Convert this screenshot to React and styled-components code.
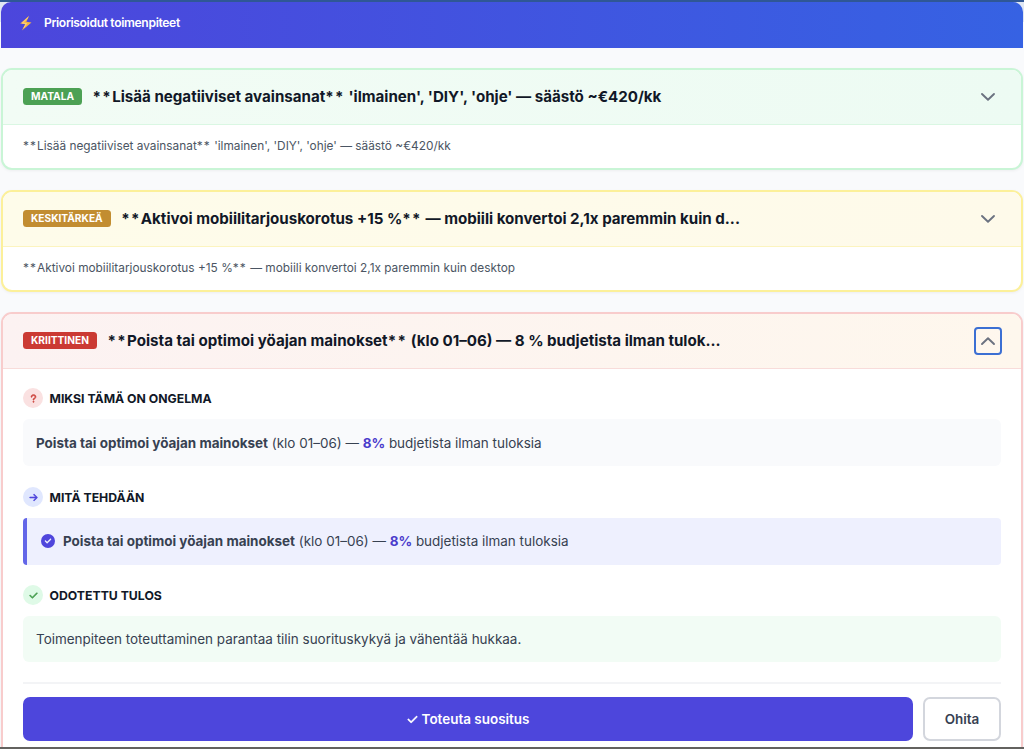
import styled, { createGlobalStyle } from 'styled-components';
import { FaArrowRight, FaCheck, FaCircleCheck, FaQuestion } from 'react-icons/fa6';

const GlobalStyle = createGlobalStyle`
  *,
  *::before,
  *::after {
    box-sizing: border-box;
    margin: 0;
    padding: 0;
  }

  body {
    margin: 0;
    background: #f9fafc;
    font-family: Inter, 'Liberation Sans', sans-serif;
    color: #111827;
    overflow: hidden;
  }

  button {
    font-family: inherit;
    cursor: pointer;
  }
`;

const tones = {
  low: {
    border: '#c9f5d6',
    divider: '#daf7e3',
    badge: '#4ca154',
    from: '#f2fcf5',
    to: '#edfbf3'
  },
  medium: {
    border: '#fcf09a',
    divider: '#fcf4bf',
    badge: '#c28d31',
    from: '#fefcea',
    to: '#fefaea'
  },
  critical: {
    border: '#f8cccc',
    divider: '#f8dcda',
    badge: '#cb3a33',
    from: '#fcf2f2',
    to: '#fef7ed'
  }
};

const Page = styled.div`
  display: flex;
  flex-direction: column;
  height: 749px;
  overflow: hidden;
  border-top: 2px solid #2f5796;
  border-bottom: 2px solid #63625f;
`;

const BannerWrap = styled.div`
  flex: none;
  padding: 0 1px;
  background: linear-gradient(#dfe6f3 0 20px, #f9fafc 20px);
`;

const Banner = styled.header`
  display: flex;
  align-items: center;
  gap: 11px;
  height: 46px;
  padding: 0 18px 5px;
  border-radius: 10px 10px 0 0;
  background: linear-gradient(90deg, #4c46dc, #3662e3);
`;

const BannerTitle = styled.h1`
  font-size: 12.1px;
  font-weight: 600;
  line-height: 16px;
  letter-spacing: -0.34px;
  color: #fff;
`;

const List = styled.main`
  display: flex;
  flex-direction: column;
  gap: 20px;
  padding: 20px 1px 0;
`;

const Card = styled.article`
  flex: none;
  border: 2px solid ${({ $tone }) => tones[$tone].border};
  border-radius: 11px;
  background: #fff;
  box-shadow: 0 1px 3px rgba(0, 0, 0, 0.05);
  overflow: hidden;
`;

const CardHeader = styled.div`
  display: flex;
  align-items: center;
  height: 55px;
  padding: 0 19px 1px 20px;
  border-bottom: 1px solid ${({ $tone }) => tones[$tone].divider};
  background: linear-gradient(
    90deg,
    ${({ $tone }) => tones[$tone].from},
    ${({ $tone }) => tones[$tone].to}
  );
`;

const Badge = styled.span`
  flex: none;
  margin-right: 10.5px;
  padding: 0 8px;
  border-radius: 3.5px;
  background: ${({ $tone }) => tones[$tone].badge};
  color: #fff;
  font-size: 10.2px;
  font-weight: 700;
  line-height: 17px;
`;

const CardTitle = styled.h2`
  flex: 1;
  font-size: 15.12px;
  font-weight: 700;
  line-height: 22px;
  white-space: nowrap;
`;

const Stars = styled.span`
  letter-spacing: 0.09em;
`;

const Toggle = styled.button`
  display: grid;
  place-items: center;
  width: 28px;
  height: 28px;
  border: 2px solid ${({ $focused }) => ($focused ? '#3b6fd3' : 'transparent')};
  border-radius: 4px;
  background: transparent;
  color: #6b7280;
`;

const Summary = styled.p`
  height: 43px;
  padding: 0 20px;
  font-size: 11.85px;
  line-height: 42px;
  color: #4b5563;
`;

const Details = styled.div`
  padding: 19px 20px 24px;
`;

const Section = styled.section`
  margin-bottom: ${({ $gap }) => $gap}px;
`;

const SectionHeading = styled.h3`
  display: flex;
  align-items: center;
  gap: 6.5px;
  height: 20px;
  margin-bottom: 11px;
  font-size: 12.25px;
  font-weight: 700;
`;

const Dot = styled.span`
  display: grid;
  place-items: center;
  width: 20px;
  height: 20px;
  border-radius: 50%;
  background: ${({ $bg }) => $bg};
  color: ${({ $color }) => $color};
  font-size: 9px;

  svg {
    stroke: currentColor;
    stroke-width: 28px;
  }
`;

const Box = styled.div`
  display: flex;
  align-items: center;
  height: 47px;
  padding: 0 13px;
  border-radius: 6px;
  background: ${({ $bg }) => $bg};
  color: #374151;
  font-size: 13.46px;
`;

const ActionBox = styled(Box)`
  gap: 8px;
  padding: 0 14px 1px;
  border-left: 4px solid #6366e8;
  border-radius: 4px;

  svg {
    color: #4f46dc;
  }
`;

const ResultBox = styled(Box)`
  height: 46px;
  padding-bottom: 1px;
`;

const Percent = styled.b`
  color: #4a3ccc;
`;

const Actions = styled.footer`
  display: flex;
  gap: 10px;
  padding-top: 13px;
  border-top: 2px solid #f3f4f6;
`;

const PrimaryButton = styled.button`
  flex: 1;
  display: flex;
  align-items: center;
  justify-content: center;
  gap: 4px;
  height: 44px;
  border: 0;
  border-radius: 7px;
  background: #4d46dc;
  color: #fff;
  font-size: 13.46px;
  font-weight: 600;

  svg {
    stroke: currentColor;
    stroke-width: 20px;
  }
`;

const GhostButton = styled.button`
  width: 78px;
  height: 44px;
  border: 2px solid #d3d6dd;
  border-radius: 7px;
  background: #fff;
  color: #374151;
  font-size: 13.46px;
  font-weight: 600;
`;

function Bolt() {
  return (
    <svg width="14" height="18" viewBox="0 0 14 18">
      <path d="M10.2 1.8 1.2 9.6l5 .6-3.3 6.4 9.6-8.2-5.2-.6z" fill="#f6b545" />
      <path d="M9.2 3.4 3.4 9l4 .5-2.5 4.4" fill="none" stroke="#fde3a0" strokeWidth="0.7" />
    </svg>
  );
}

function Chevron({ up }) {
  return (
    <svg width="16" height="16" viewBox="0 0 16 16">
      <path
        d={up ? 'M2 11 8 5.2 14 11' : 'M2 5 8 10.8 14 5'}
        fill="none"
        stroke="currentColor"
        strokeWidth="1.9"
        strokeLinecap="round"
        strokeLinejoin="round"
      />
    </svg>
  );
}

// markdown markers stay visible, just spaced a bit wider than the text
function RawText({ strong, rest }) {
  return (
    <>
      <Stars>**</Stars>
      {strong}
      <Stars>**</Stars> {rest}
    </>
  );
}

function Recommendation({ tone, level, strong, rest, summary, open, children }) {
  return (
    <Card $tone={tone}>
      <CardHeader $tone={tone}>
        <Badge $tone={tone}>{level}</Badge>
        <CardTitle>
          <RawText strong={strong} rest={rest} />
        </CardTitle>
        <Toggle $focused={open} aria-expanded={!!open}>
          <Chevron up={open} />
        </Toggle>
      </CardHeader>
      {summary && (
        <Summary>
          <RawText strong={strong} rest={summary} />
        </Summary>
      )}
      {children}
    </Card>
  );
}

function NightAdsText() {
  return (
    <p>
      <b>Poista tai optimoi yöajan mainokset</b> (klo 01–06) — <Percent>8%</Percent> budjetista
      ilman tuloksia
    </p>
  );
}

function App() {
  return (
    <>
      <GlobalStyle />
      <Page>
        <BannerWrap>
          <Banner>
            <Bolt />
            <BannerTitle>Priorisoidut toimenpiteet</BannerTitle>
          </Banner>
        </BannerWrap>

        <List>
          <Recommendation
            tone="low"
            level="MATALA"
            strong="Lisää negatiiviset avainsanat"
            rest="'ilmainen', 'DIY', 'ohje' — säästö ~€420/kk"
            summary="'ilmainen', 'DIY', 'ohje' — säästö ~€420/kk"
          />

          <Recommendation
            tone="medium"
            level="KESKITÄRKEÄ"
            strong="Aktivoi mobiilitarjouskorotus +15 %"
            rest="— mobiili konvertoi 2,1x paremmin kuin d..."
            summary="— mobiili konvertoi 2,1x paremmin kuin desktop"
          />

          <Recommendation
            tone="critical"
            level="KRIITTINEN"
            strong="Poista tai optimoi yöajan mainokset"
            rest="(klo 01–06) — 8 % budjetista ilman tulok..."
            open
          >
            <Details>
              <Section $gap={21}>
                <SectionHeading>
                  <Dot $bg="#fae1e1" $color="#d04a43">
                    <FaQuestion />
                  </Dot>
                  MIKSI TÄMÄ ON ONGELMA
                </SectionHeading>
                <Box $bg="#f9fafc">
                  <NightAdsText />
                </Box>
              </Section>

              <Section $gap={20}>
                <SectionHeading>
                  <Dot $bg="#e0e7fe" $color="#4f46dc">
                    <FaArrowRight />
                  </Dot>
                  MITÄ TEHDÄÄN
                </SectionHeading>
                <ActionBox $bg="#eef0fe">
                  <FaCircleCheck size={14} />
                  <NightAdsText />
                </ActionBox>
              </Section>

              <Section $gap={20}>
                <SectionHeading>
                  <Dot $bg="#dffae7" $color="#4ca154">
                    <FaCheck />
                  </Dot>
                  ODOTETTU TULOS
                </SectionHeading>
                <ResultBox $bg="#f2fcf5">
                  <p>Toimenpiteen toteuttaminen parantaa tilin suorituskykyä ja vähentää hukkaa.</p>
                </ResultBox>
              </Section>

              <Actions>
                <PrimaryButton>
                  <FaCheck size={11} />
                  Toteuta suositus
                </PrimaryButton>
                <GhostButton>Ohita</GhostButton>
              </Actions>
            </Details>
          </Recommendation>
        </List>
      </Page>
    </>
  );
}

export default App;
